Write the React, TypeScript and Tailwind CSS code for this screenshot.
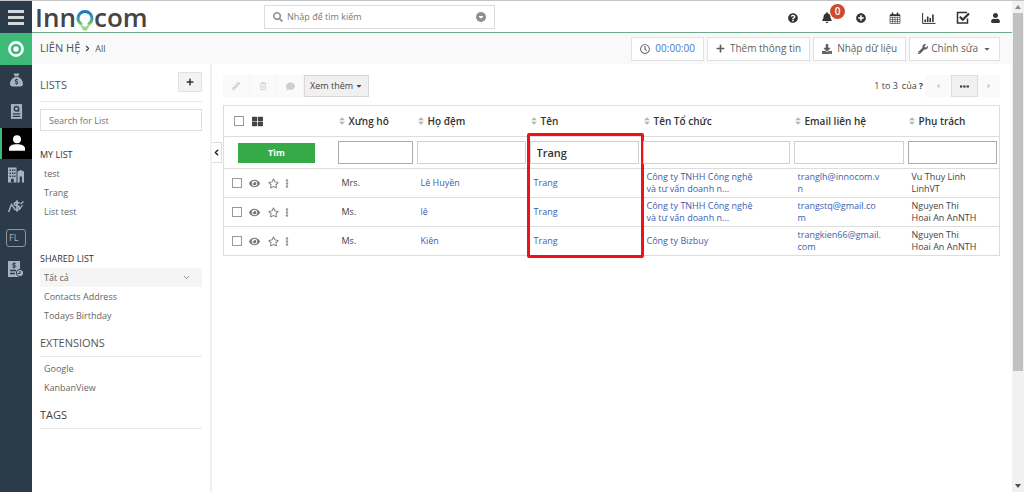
import React from 'react';
import {
  FaBell,
  FaCaretDown,
  FaCaretLeft,
  FaCaretRight,
  FaComment,
  FaDownload,
  FaEllipsisV,
  FaEye,
  FaPencilAlt,
  FaPlus,
  FaPlusCircle,
  FaQuestionCircle,
  FaRegClock,
  FaRegStar,
  FaRegTrashAlt,
  FaSearch,
  FaThLarge,
  FaUser,
  FaWrench } from
'react-icons/fa';
import { FaSackDollar } from 'react-icons/fa6';
import { ChevronDown, ChevronLeft, ChevronRight } from 'lucide-react';

interface Contact {
  id: number;
  title: string;
  lastName: string;
  firstName: string;
  company: string[];
  email: string[];
  owner: string[];
}
interface Column {
  id: string;
  label: string;
  value?: string;
  dark?: boolean;
}

const contacts: Contact[] = [
{
  id: 1,
  title: 'Mrs.',
  lastName: 'Lê Huyền',
  firstName: 'Trang',
  company: ['Công ty TNHH Công nghệ', 'và tư vấn doanh n...'],
  email: ['tranglh@innocom.v', 'n'],
  owner: ['Vu Thuy Linh', 'LinhVT']
},
{
  id: 2,
  title: 'Ms.',
  lastName: 'lê',
  firstName: 'Trang',
  company: ['Công ty TNHH Công nghệ', 'và tư vấn doanh n...'],
  email: ['trangstq@gmail.co', 'm'],
  owner: ['Nguyen Thi', 'Hoai An AnNTH']
},
{
  id: 3,
  title: 'Ms.',
  lastName: 'Kiên',
  firstName: 'Trang',
  company: ['Công ty Bizbuy'],
  email: ['trangkien66@gmail.', 'com'],
  owner: ['Nguyen Thi', 'Hoai An AnNTH']
}];

const columns: Column[] = [
{ id: 'title', label: 'Xưng hô', dark: true },
{ id: 'lastName', label: 'Họ đệm' },
{ id: 'firstName', label: 'Tên', value: 'Trang' },
{ id: 'company', label: 'Tên Tổ chức' },
{ id: 'email', label: 'Email liên hệ' },
{ id: 'owner', label: 'Phụ trách', dark: true }];

function LogoBulb() {
  return (
    <svg viewBox="0 0 18 24" className="w-[18px] h-6 mt-2" fill="none">
      <defs>
        <linearGradient id="bulb" x1="0" y1="0" x2="0" y2="1">
          <stop offset="0" stopColor="#1b75c4" />
          <stop offset="0.45" stopColor="#2e95b8" />
          <stop offset="1" stopColor="#86c95b" />
        </linearGradient>
      </defs>
      <path
        d="M5.8 15.500C3 13.500 2 11.200 2 9.400a7 7 0 0 1 14 0c0 1.800-1 4.100-3.800 6.100"
        stroke="url(#bulb)"
        strokeWidth="3" />
      <path d="M5.200 15l1.300 3.500h5l1.300-3.500" stroke="#9ad58a" strokeWidth="1.800" />
      <path d="M6.800 20.300h4.400" stroke="#8ccb78" strokeWidth="2" />
    </svg>);

}
function TargetIcon() {
  return (
    <svg viewBox="0 0 18 18" className="w-[18px] h-[18px]" fill="none" stroke="#fff">
      <circle cx="9" cy="9" r="6.600" strokeWidth="2.600" />
      <circle cx="9" cy="9" r="2.700" fill="#fff" stroke="none" />
    </svg>);

}
function BadgeIcon() {
  return (
    <svg viewBox="0 0 14 18" className="w-[13px] h-[17px]">
      <path fill="#a9b3bd" d="M1 1h12v16H1z" />
      <circle cx="7" cy="6" r="2.400" fill="none" stroke="#2c3b49" strokeWidth="1.500" />
      <path stroke="#2c3b49" strokeWidth="1.200" d="M8 7l2 2M3 11.500h8M3 14.200h8" />
    </svg>);

}
function PersonIcon() {
  return (
    <svg viewBox="0 0 16 16" className="w-4 h-4 text-white" fill="currentColor">
      <circle cx="8" cy="4.200" r="4" />
      <path d="M0 15.800V13.500c0-2.800 3.500-4.300 8-4.300s8 1.500 8 4.300v2.300z" />
    </svg>);

}
function BuildingIcon() {
  return (
    <svg viewBox="0 0 16 16" className="w-4 h-4">
      <path fill="#a9b3bd" d="M0 .5h8.500V15.500H0zM9.500 7V4.500l3-1.500 3.500 1.500V15.500h-2V9.500h-2.300v6H9.500z" />
      <path
        fill="#2c3b49"
        d="M1.500 2.500h1.500V4H1.500zM4 2.500h1.500V4H4zM6.300 2.500h1.200V4H6.300zM1.500 5.500h1.500V7H1.500zM4 5.500h1.500V7H4zM6.300 5.500h1.200V7H6.300zM1.500 8.500h1.500V10H1.500zM4 8.500h1.500V10H4zM6.300 8.500h1.200V10H6.300zM3 11.800h2.800v3.700H3z" />
    </svg>);

}
function OpportunityIcon() {
  return (
    <svg viewBox="0 0 16 14" className="w-4 h-[14px]" fill="none" stroke="#a9b3bd">
      <path strokeWidth="1.400" d="M.6 13L3.500 5.500l3 4M12.500 5L15.500 2.500" />
      <path strokeWidth="1.600" d="M11.500 4.500C10 2.500 6 3 6.300 5.200c.3 2 5.400 1.400 5.400 3.800 0 2.200-4.200 2.400-5.700.4M9 1.200v11.600" />
      <path strokeWidth="1.200" d="M11.500 10.500L14.500 6" />
    </svg>);

}
function InvoiceIcon() {
  return (
    <svg viewBox="0 0 16 16" className="w-4 h-4">
      <path fill="#a9b3bd" d="M0 0h12v16H0z" />
      <path fill="none" stroke="#2c3b49" d="M7.800 2.800C6.500 2 4.400 2.200 4.400 3.400c0 1.400 3.400.6 3.400 2 0 1.200-2.300 1.400-3.600.5M6 1.300v6.200" />
      <path stroke="#2c3b49" strokeWidth="1.300" d="M2 9.500h6M2 12.500h5" />
      <circle cx="12" cy="12" r="3.600" fill="#a9b3bd" stroke="#2c3b49" />
      <path fill="none" stroke="#2c3b49" d="M12 10v2.400h-2" />
    </svg>);

}
function CalendarIcon() {
  return (
    <svg viewBox="0 0 12 12" className="w-3 h-3" fill="none" stroke="currentColor">
      <path d="M1 3h10v8.500H1zM1 5.300h10M1 7.400h10M1 9.400h10M3.500 5v6.500M6 5v6.500M8.500 5v6.500" strokeWidth=".6" />
      <path d="M1 3.200h10" strokeWidth="1.800" />
      <path d="M3.500.5v2.500M8.500.5v2.500" strokeWidth="1.500" />
    </svg>);

}
function ChartIcon() {
  return (
    <svg viewBox="0 0 14 12" className="w-[14px] h-3" fill="none" stroke="currentColor">
      <path d="M.6 1v10.400H13.500" strokeWidth="1" />
      <path d="M3.200 10V7.500M5.700 10V4.500M8.200 10V6M10.900 10V2.500" strokeWidth="1.600" />
    </svg>);

}
function TaskIcon() {
  return (
    <svg viewBox="0 0 14 13" className="w-[14px] h-[13px]" fill="none" stroke="currentColor">
      <path d="M11.500 7.500V12H1.500V1.500H11" strokeWidth="1.500" />
      <path d="M3.800 5.800l3 3L13 2.500" strokeWidth="2.200" />
    </svg>);

}
function SortIcon() {
  return (
    <svg viewBox="0 0 6 8" className="w-[6px] h-2 shrink-0" fill="#b5b5b5">
      <path d="M0 3.300L3 .3l3 3zM0 4.700h6l-3 3z" />
    </svg>);

}

const navItems = [
{ id: 'marketing', icon: <TargetIcon />, style: 'bg-[#3dba78]' },
{ id: 'sales', icon: <FaSackDollar className="w-[13px] h-4" />, style: '' },
{ id: 'leads', icon: <BadgeIcon />, style: '' },
{ id: 'contacts', icon: <PersonIcon />, style: 'bg-black border-l-2 border-[#3dba78]' },
{ id: 'organizations', icon: <BuildingIcon />, style: '' },
{ id: 'opportunities', icon: <OpportunityIcon />, style: '' },
{
  id: 'fl',
  icon: <span className="w-5 h-[18px] pl-[2px] flex items-center border border-[#8c98a4] rounded-[3px] text-[9px]">FL</span>,
  style: ''
},
{ id: 'invoices', icon: <InvoiceIcon />, style: '' }];

const topItems = [
{ id: 'help', icon: <FaQuestionCircle className="w-[10px] h-[10px]" /> },
{ id: 'notifications', icon: <FaBell className="w-[10px] h-[11px]" />, badge: '0' },
{ id: 'add', icon: <FaPlusCircle className="w-[10px] h-[10px]" /> },
{ id: 'calendar', icon: <CalendarIcon /> },
{ id: 'reports', icon: <ChartIcon /> },
{ id: 'tasks', icon: <TaskIcon /> }];

function SideNav() {
  return (
    <nav className="w-8 shrink-0 bg-[#2c3b49] text-[#a9b3bd]">
      <button aria-label="menu" className="w-full h-8 flex flex-col items-center justify-center gap-[3px]">
        <span className="w-4 h-[3px] bg-[#d3d8dd]" />
        <span className="w-4 h-[3px] bg-[#d3d8dd]" />
        <span className="w-4 h-[3px] bg-[#d3d8dd]" />
      </button>
      <div className="grid grid-rows-8 h-[252px]">
        {navItems.map((item) =>
        <button key={item.id} aria-label={item.id} className={`flex items-center justify-center ${item.style}`}>
            {item.icon}
          </button>
        )}
      </div>
    </nav>);

}
function TopBar() {
  return (
    <header className="h-8 flex items-center border-b border-[#6fa98a] bg-white">
      <a href="#" className="w-[232px] h-full pl-[3px] flex items-center text-[26px] leading-8 font-semibold text-[#454547]">
        Inn<LogoBulb />com
      </a>
      <div className="w-[231px] h-6 px-2 flex items-center gap-1 border border-[#dcdcdc] text-[#8f8f8f]">
        <FaSearch className="w-[10px] h-[10px]" />
        <input
          aria-label="search"
          placeholder="Nhập để tìm kiếm"
          className="flex-1 min-w-0 text-[9px] outline-none placeholder:text-[#7a7a7a]" />
        <button aria-label="search options" className="w-[10px] h-[10px] flex items-center justify-center rounded-full bg-[#8f8f8f]">
          <FaCaretDown className="w-2 h-2 text-white" />
        </button>
      </div>
      <div className="ml-auto flex items-center h-full text-[#333]">
        {topItems.map((item) =>
        <button key={item.id} aria-label={item.id} className="relative w-[34px] h-full pt-[2px] flex items-center justify-center">
            {item.icon}
            {item.badge &&
          <span className="absolute top-[3px] left-5 w-[15px] h-[15px] flex items-center justify-center rounded-full bg-[#cd4a2b] text-white text-[10px] leading-[15px] font-semibold">
                {item.badge}
              </span>
          }
          </button>
        )}
        <button aria-label="account" className="w-[30px] h-full pt-[2px] mr-[2px] flex items-center justify-center">
          <FaUser className="w-[9px] h-[10px]" />
        </button>
      </div>
    </header>);

}
function ModuleBar() {
  const button = 'h-6 px-2 flex items-center gap-[5px] border border-[#e2e2e2] bg-white text-[10px] text-[#5f5f5f]';
  return (
    <div className="h-[31px] pl-2 pr-3 flex items-center bg-[#f9f9f9]">
      <h1 className="text-[11px] text-[#4f5357]">LIÊN HỆ</h1>
      <ChevronRight className="w-[9px] h-[9px] mx-[3px] text-[#444]" strokeWidth={3} />
      <span className="text-[9px] text-[#555]">All</span>
      <div className="ml-auto flex gap-[3px]">
        <button className={button}>
          <FaRegClock className="w-[10px] h-[10px]" />
          <span className="text-[#4a76c4]">00:00:00</span>
        </button>
        <button className={button}>
          <FaPlus className="w-[9px] h-[9px]" />
          Thêm thông tin
        </button>
        <button className={button}>
          <FaDownload className="w-[10px] h-[10px]" />
          Nhập dữ liệu
        </button>
        <button className={button}>
          <span className="flex items-center gap-[3px]">
            <FaWrench className="w-[10px] h-[10px]" />
            Chỉnh sửa
          </span>
          <FaCaretDown className="w-2 h-2" />
        </button>
      </div>
    </div>);

}
function ListLink({ label, active }: {label: string;active?: boolean;}) {
  return (
    <a
      href="#"
      className={`h-[19px] px-1 flex items-center justify-between text-[9px] text-[#666] ${active ? 'bg-[#f5f5f5]' : ''}`}>

      {label}
      {active && <ChevronDown className="w-[9px] h-[9px] mr-[7px]" />}
    </a>);

}
function ListPanel() {
  return (
    <aside className="w-[180px] shrink-0 pl-2 pr-2 border-r-2 border-[#f0f0f0]">
      <div className="h-[38px] pt-2 flex items-start justify-between border-b border-[#e8e8e8]">
        <h2 className="pt-[3px] text-[11px] leading-5 text-[#555]">LISTS</h2>
        <button aria-label="add list" className="w-6 h-5 flex items-center justify-center border border-[#e0e0e0] bg-[#f3f3f3] text-[#333]">
          <FaPlus className="w-2 h-2" />
        </button>
      </div>
      <input
        aria-label="Search for List"
        placeholder="Search for List"
        className="w-full h-[22px] mt-[7px] px-2 border border-[#ddd] text-[9px] outline-none placeholder:text-[#757575]" />
      <h3 className="mt-[14px] text-[9px] leading-[19px] text-[#333]">MY LIST</h3>
      <ListLink label="test" />
      <ListLink label="Trang" />
      <ListLink label="List test" />
      <h3 className="mt-7 text-[9px] leading-[19px] text-[#333]">SHARED LIST</h3>
      <ListLink label="Tất cả" active />
      <ListLink label="Contacts Address" />
      <ListLink label="Todays Birthday" />
      <h2 className="mt-2 pb-[3px] mb-[2px] text-[11px] leading-5 text-[#555] border-b border-[#e8e8e8]">EXTENSIONS</h2>
      <ListLink label="Google" />
      <ListLink label="KanbanView" />
      <h2 className="mt-2 pb-[3px] text-[11px] leading-5 text-[#444] border-b border-[#e8e8e8]">TAGS</h2>
    </aside>);

}
function Toolbar() {
  const faded = 'w-[27px] flex items-center justify-center bg-[#fafafa] border-r border-[#f3f3f3] text-[#cfcfcf]';
  return (
    <div className="h-[22px] flex items-stretch justify-between text-[9px] text-[#444]">
      <div className="flex">
        <button aria-label="edit" className={faded}><FaPencilAlt className="w-2 h-2" /></button>
        <button aria-label="delete" className={faded}><FaRegTrashAlt className="w-2 h-2" /></button>
        <button aria-label="comment" className={faded}><FaComment className="w-[9px] h-[9px]" /></button>
        <button className="px-[5px] flex items-center gap-[2px] border border-[#d9d9d9] bg-[#f0f0f0]">
          Xem thêm
          <FaCaretDown className="w-2 h-2" />
        </button>
      </div>
      <div className="flex">
        <span className="mr-[2px] flex items-center gap-1">
          1 to 3 <span>của</span> <b className="-ml-[2px]">?</b>
        </span>
        <button aria-label="previous" className="w-[26px] flex items-center justify-center bg-[#fafafa] text-[#ccc]">
          <FaCaretLeft className="w-2 h-2" />
        </button>
        <button aria-label="go to page" className="w-[27px] flex items-center justify-center border border-[#ddd] bg-[#f0f0f0]">
          <svg viewBox="0 0 9 3" className="w-[9px] h-[3px]" fill="#333">
            <path d="M0 .5h2.300v2H0zM3.300.5h2.300v2H3.300zM6.600.5h2.300v2H6.600z" />
          </svg>
        </button>
        <button aria-label="next" className="w-[22px] flex items-center justify-center bg-[#fafafa] text-[#ccc]">
          <FaCaretRight className="w-2 h-2" />
        </button>
      </div>
    </div>);

}
function Lines({ text }: {text: string[];}) {
  return (
    <>
      {text.map((line) => <span key={line} className="block">{line}</span>)}
    </>);

}
function ContactTable() {
  const checkbox = 'appearance-none w-[10px] h-[10px] border border-[#999] bg-white';
  const cell = 'px-[6px] whitespace-nowrap';
  const link = 'text-[#3b60b0]';
  return (
    <table className="w-full mt-2 table-fixed border-collapse border border-[#ddd] text-[9px] leading-3 text-[#444]">
      <colgroup>
        <col className="w-[112px]" />
        <col className="w-[79px]" />
        <col className="w-[113px]" />
        <col className="w-[113px]" />
        <col className="w-[151px]" />
        <col className="w-[114px]" />
        <col className="w-[94px]" />
      </colgroup>
      <thead>
        <tr className="h-[31px] border-b border-[#ddd]">
          <th className="pl-[10px]">
            <div className="flex items-center gap-2">
              <input type="checkbox" aria-label="select all" className={checkbox} />
              <FaThLarge className="w-[11px] h-[11px] text-[#444]" />
            </div>
          </th>
          {columns.map((col) =>
          <th key={col.id} className="pl-[3px] text-left text-[10px] font-semibold text-[#333]">
              <div className="flex items-center gap-1">
                <SortIcon />
                {col.label}
              </div>
            </th>
          )}
        </tr>
      </thead>
      <tbody>
        <tr className="h-8 border-b border-[#ddd]">
          <td className="pl-[14px]">
            <button className="w-[77px] h-5 block bg-[#35aa47] text-white text-[9px] font-bold">Tìm</button>
          </td>
          {columns.map((col) =>
          <td key={col.id} className="relative px-[2px]">
              <input
              aria-label={col.label}
              defaultValue={col.value}
              className={`w-full h-[23px] block px-[6px] border text-[11px] font-semibold text-[#333] outline-none ${col.dark ? 'border-[#aaa]' : 'border-[#d0d0d0]'}`} />

              {col.value &&
            <span className="absolute -top-1 -left-px -right-[3px] h-[125px] border-[3px] border-[#f01018] rounded-[2px] pointer-events-none" />
            }
            </td>
          )}
        </tr>
        {contacts.map((contact) =>
        <tr key={contact.id} className="h-[29px] border-b border-[#ddd]">
            <td className="pl-2">
              <div className="flex items-center text-[#777]">
                <input type="checkbox" aria-label={`select ${contact.id}`} className={checkbox} />
                <button aria-label="view" className="ml-[7px]"><FaEye className="w-[11px] h-[11px]" /></button>
                <button aria-label="follow" className="ml-2"><FaRegStar className="w-[11px] h-[11px]" /></button>
                <button aria-label="more" className="ml-1 text-[#999]"><FaEllipsisV className="w-2 h-[9px]" /></button>
              </div>
            </td>
            <td className={cell}>{contact.title}</td>
            <td className={cell}><a href="#" className={link}>{contact.lastName}</a></td>
            <td className={cell}><a href="#" className={link}>{contact.firstName}</a></td>
            <td className={cell}><a href="#" className={link}><Lines text={contact.company} /></a></td>
            <td className={cell}><a href="#" className={link}><Lines text={contact.email} /></a></td>
            <td className={cell}><Lines text={contact.owner} /></td>
          </tr>
        )}
      </tbody>
    </table>);

}
function ScrollTrack() {
  return (
    <div className="w-3 shrink-0 px-px flex flex-col items-center bg-[#f1f1f1]">
      <svg viewBox="0 0 6 4" className="w-[6px] h-1 my-1" fill="#8a8a8a"><path d="M0 4l3-4 3 4z" /></svg>
      <div className="w-full h-[73%] bg-[#c1c1c1]" />
      <svg viewBox="0 0 6 4" className="w-[6px] h-1 mt-auto mb-1" fill="#505050"><path d="M0 0h6L3 4z" /></svg>
    </div>);

}
export default function App() {
  return (
    <div className="min-h-screen flex bg-white border-t border-[#c4c4c8] font-['Open_Sans',sans-serif]">
      <SideNav />
      <div className="flex-1 min-w-0 flex flex-col">
        <TopBar />
        <ModuleBar />
        <div className="flex-1 flex">
          <ListPanel />
          <main className="relative flex-1 min-w-0 pt-[11px] pl-[11px] pr-3">
            <button
              aria-label="toggle lists"
              className="absolute left-0 top-[78px] w-[10px] h-[21px] flex items-center justify-center border border-l-0 border-[#ddd] bg-white text-[#222]">

              <ChevronLeft className="w-[9px] h-[9px]" strokeWidth={4} />
            </button>
            <Toolbar />
            <ContactTable />
          </main>
        </div>
      </div>
      <ScrollTrack />
    </div>);

}
